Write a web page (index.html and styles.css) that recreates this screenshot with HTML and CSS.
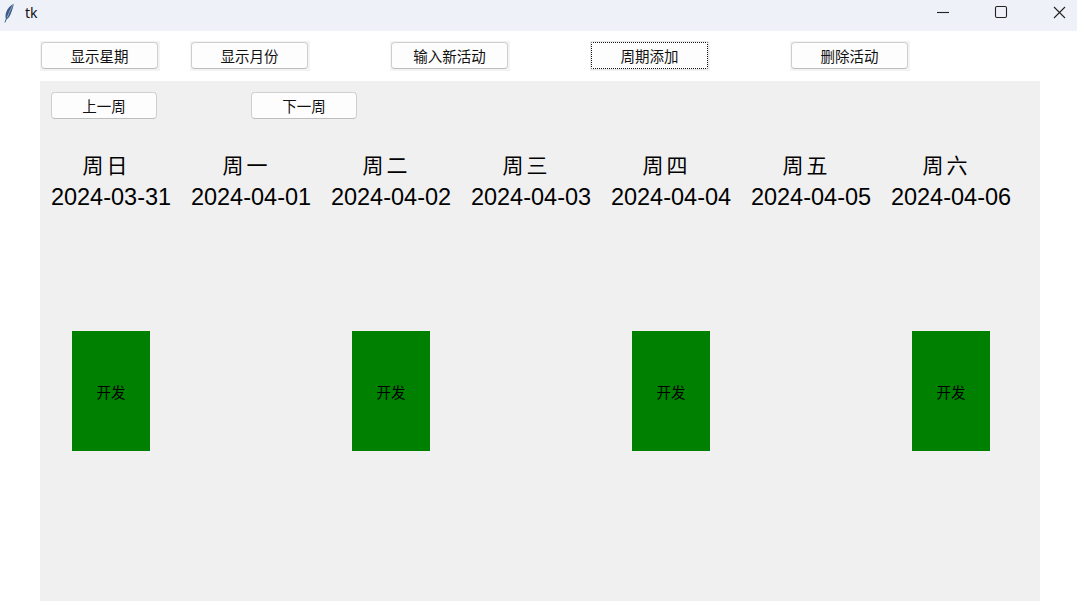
FILE: index.html
```html
<!DOCTYPE html>
<html lang="zh">
<head>
<meta charset="utf-8">
<title>tk</title>
<link rel="stylesheet" href="styles.css">
</head>
<body>
<div class="window">
  <div class="titlebar">
    <div class="app">
      <svg class="feather" width="12" height="20" viewBox="0 0 12 20">
        <path d="M10.8 0.8 C7.5 2.2 4.2 5.5 3 9.8 C2.3 12.3 2.4 14.4 2.9 15.6 L1.4 19.4 L2.3 19.6 L3.7 16.2 C5.3 15.6 6.8 13.5 7.9 10.6 C9.2 7.2 10.4 3.6 10.8 0.8 Z" fill="#3b5a86"/>
        <path d="M10.8 0.8 C8.6 4.2 6.2 9 4.2 14.6" stroke="#9fb6d6" stroke-width="0.8" fill="none"/>
      </svg>
      <span class="title">tk</span>
    </div>
    <div class="controls">
      <svg class="ctl" width="58" height="31" viewBox="0 0 58 31"><path d="M10 12.5 H22" stroke="#222" stroke-width="1.1"/></svg>
      <svg class="ctl" width="46" height="31" viewBox="0 0 46 31"><rect x="10.5" y="6.5" width="11" height="11" rx="1.5" fill="none" stroke="#222" stroke-width="1.1"/></svg>
      <svg class="ctl" width="46" height="31" viewBox="0 0 46 31"><path d="M23 7 L34 18 M34 7 L23 18" stroke="#222" stroke-width="1.1"/></svg>
    </div>
  </div>

  <div class="toolbar">
    <div class="btn-wrap"><button class="btn">显示星期</button></div>
    <div class="btn-wrap gap30"><button class="btn">显示月份</button></div>
    <div class="btn-wrap gap80"><button class="btn">输入新活动</button></div>
    <div class="btn-wrap gap80"><button class="btn focused">周期添加</button></div>
    <div class="btn-wrap gap80"><button class="btn">删除活动</button></div>
  </div>

  <div class="panel">
    <div class="nav">
      <div class="btn-wrap nav-wrap"><button class="btn nav-btn">上一周</button></div>
      <div class="btn-wrap nav-wrap gap92"><button class="btn nav-btn">下一周</button></div>
    </div>

    <div class="days">
      <div class="day"><div class="dname">周日</div><div class="ddate">2024-03-31</div></div>
      <div class="day"><div class="dname">周一</div><div class="ddate">2024-04-01</div></div>
      <div class="day"><div class="dname">周二</div><div class="ddate">2024-04-02</div></div>
      <div class="day"><div class="dname">周三</div><div class="ddate">2024-04-03</div></div>
      <div class="day"><div class="dname">周四</div><div class="ddate">2024-04-04</div></div>
      <div class="day"><div class="dname">周五</div><div class="ddate">2024-04-05</div></div>
      <div class="day"><div class="dname">周六</div><div class="ddate">2024-04-06</div></div>
    </div>

    <div class="events">
      <div class="slot"><div class="event">开发</div></div>
      <div class="slot"></div>
      <div class="slot"><div class="event">开发</div></div>
      <div class="slot"></div>
      <div class="slot"><div class="event">开发</div></div>
      <div class="slot"></div>
      <div class="slot"><div class="event">开发</div></div>
    </div>
  </div>
</div>
</body>
</html>
```

FILE: styles.css
```css
* { box-sizing: border-box; }
html, body {
  margin: 0;
  padding: 0;
  background: #ffffff;
}
body {
  width: 1077px;
  height: 613px;
  overflow: hidden;
  font-family: "Noto Sans CJK SC", "Noto Sans", sans-serif;
}
.titlebar {
  height: 31px;
  background: #eef2f8;
  display: flex;
  justify-content: space-between;
  align-items: flex-start;
}
.app {
  display: flex;
  align-items: center;
  height: 25px;
  padding-left: 3px;
}
.feather { display: block; margin-top: 1px; }
.title {
  font-family: "Noto Sans", "Liberation Sans", sans-serif;
  font-size: 14px;
  color: #111;
  margin-left: 10px;
  line-height: 25px;
}
.controls { display: flex; }
.ctl { display: block; }

.toolbar {
  display: flex;
  padding: 10px 0 10px 40px;
  height: 50px;
}
.btn-wrap {
  width: 120px;
  height: 30px;
  background: #f3f3f3;
  padding: 1px 2px 2px 1px;
}
.gap30 { margin-left: 30px; }
.gap80 { margin-left: 80px; }
.gap92 { margin-left: 92px; }
.btn {
  display: flex;
  align-items: center;
  justify-content: center;
  width: 100%;
  height: 100%;
  margin: 0;
  padding: 1px 0 0 0;
  background: #fdfdfd;
  border: 1px solid #cfcfcf;
  border-bottom-color: #bdbdbd;
  border-radius: 4px;
  font-family: "Noto Sans CJK SC", sans-serif;
  font-size: 14.5px;
  color: #111;
  line-height: 1;
}
.btn.focused {
  border: 1px dotted #111;
  border-radius: 1px;
  outline: 1px solid #e6e6e6;
}

.panel {
  margin-left: 40px;
  width: 1000px;
  height: 520px;
  background: #f0f0f0;
  padding: 10px 0 0 0;
}
.nav {
  display: flex;
  padding-left: 10px;
  height: 29px;
}
.nav-wrap {
  width: 108px;
  height: 29px;
  background: #f0f0f0;
  padding: 1px;
}
.nav-btn { font-size: 14.5px; }

.days {
  display: grid;
  grid-template-columns: repeat(7, 140px);
  margin-top: 32px;
  padding-left: 1px;
}
.day {
  display: flex;
  flex-direction: column;
  align-items: center;
  color: #000;
}
.dname {
  font-family: "Noto Sans CJK SC", sans-serif;
  font-size: 21px;
  line-height: 24px;
  height: 30px;
  letter-spacing: 3px;
  padding-right: 9px;
}
.ddate {
  font-family: "Liberation Sans", Arial, sans-serif;
  font-size: 23.5px;
  line-height: 30px;
  height: 30px;
}

.events {
  display: grid;
  grid-template-columns: repeat(7, 140px);
  margin-top: 119px;
  padding-left: 1px;
}
.slot {
  display: flex;
  justify-content: center;
  height: 120px;
}
.event {
  width: 78px;
  height: 120px;
  background: #008000;
  display: flex;
  align-items: center;
  justify-content: center;
  font-family: "Noto Sans CJK SC", sans-serif;
  font-size: 14.5px;
  color: #000;
}
```
